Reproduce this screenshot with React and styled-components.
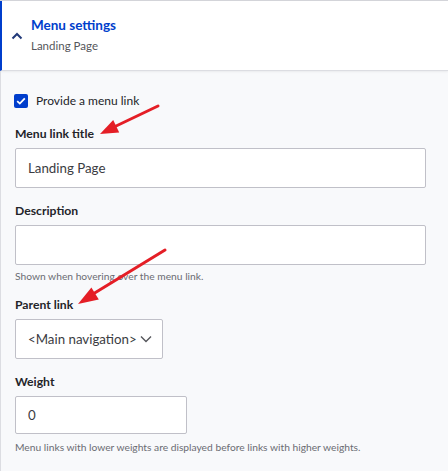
import React from "react";
import styled, { createGlobalStyle } from "styled-components";

const Global = createGlobalStyle`
  html, body { margin: 0; padding: 0; background: #f8f9fb; }
  body { font-family: Lato, "Noto Sans", sans-serif; color: #232429; }
  * { box-sizing: border-box; }
`;

const Page = styled.div`
  position: relative;
  width: 448px;
  height: 471px;
  overflow: hidden;
  background: #f8f9fb;
  border-top: 1px solid #d3d4d9;
`;

const Header = styled.div`
  display: flex;
  align-items: center;
  gap: 8px;
  height: 70px;
  padding: 0 0 0 9px;
  background: #fff;
  border-left: 2px solid #003ecc;
  border-bottom: 1px solid #dcdde2;
  box-shadow: 0 1px 2px rgba(0,0,0,0.06);
`;

const HeaderText = styled.div`
  display: flex;
  flex-direction: column;
  gap: 4px;
  margin-top: -2px;
`;

const Title = styled.div`
  font-size: 13.5px;
  font-weight: 700;
  color: #003ecc;
  line-height: 17px;
`;

const Sub = styled.div`
  font-size: 11.5px;
  color: #55565b;
  line-height: 15px;
`;

const Body = styled.div`
  display: flex;
  flex-direction: column;
  padding: 22px 22px 0 14px;
  border-left: 1px solid #dcdde2;
  height: 400px;
`;

const CheckRow = styled.label`
  display: flex;
  align-items: center;
  gap: 8px;
  font-size: 12px;
  color: #232429;
  margin-left: -1px;
  line-height: 15px;
`;

const Box = styled.span`
  width: 14px;
  height: 14px;
  border-radius: 2px;
  background: #003ecc;
  display: flex;
  align-items: center;
  justify-content: center;
`;

const Field = styled.div`
  display: flex;
  flex-direction: column;
  margin-top: ${p => p.$mt}px;
`;

const Label = styled.div`
  font-size: 12.2px;
  font-weight: 700;
  color: #232429;
  line-height: 16px;
  margin-bottom: 6px;
`;

const Input = styled.div`
  display: flex;
  align-items: center;
  justify-content: space-between;
  width: ${p => p.$w || "100%"};
  height: ${p => p.$h || 40}px;
  padding: 0 10px 0 12px;
  background: #fff;
  border: 1px solid #c0c0c8;
  border-radius: 2px;
  font-size: 13.3px;
  color: #3b3c42;
  white-space: nowrap;
`;

const Help = styled.div`
  font-size: 10.25px;
  color: #6b6c73;
  margin-top: ${p => p.$mt}px;
  line-height: 12px;
`;

const Arrow = styled.svg`
  position: absolute;
  left: 0;
  top: 0;
  pointer-events: none;
`;

export default function App() {
  return (
    <>
      <Global />
      <Page>
        <Header>
          <svg width="12" height="8" viewBox="0 0 12 8">
            <path d="M1.5 6.5 L6 2 L10.5 6.5" fill="none" stroke="#223a7a" strokeWidth="2" />
          </svg>
          <HeaderText>
            <Title>Menu settings</Title>
            <Sub>Landing Page</Sub>
          </HeaderText>
        </Header>
        <Body>
          <CheckRow>
            <Box>
              <svg width="10" height="8" viewBox="0 0 10 8">
                <path d="M1.2 4.2 L3.8 6.6 L8.8 1.4" fill="none" stroke="#fff" strokeWidth="1.8" />
              </svg>
            </Box>
            Provide a menu link
          </CheckRow>
          <Field $mt={18}>
            <Label>Menu link title</Label>
            <Input>Landing Page</Input>
          </Field>
          <Field $mt={15}>
            <Label>Description</Label>
            <Input />
            <Help $mt={5}>Shown when hovering over the menu link.</Help>
          </Field>
          <Field $mt={15}>
            <Label>Parent link</Label>
            <Input $w="148px">
              &lt;Main navigation&gt;
              <svg width="12" height="8" viewBox="0 0 12 8">
                <path d="M1 1.5 L6 6.5 L11 1.5" fill="none" stroke="#55565b" strokeWidth="1.4" />
              </svg>
            </Input>
          </Field>
          <Field $mt={15}>
            <Label>Weight</Label>
            <Input $w="172px" $h={38}>0</Input>
            <Help $mt={7}>Menu links with lower weights are displayed before links with higher weights.</Help>
          </Field>
        </Body>
        <Arrow width="448" height="471" viewBox="0 0 448 471">
          <line x1="158" y1="105" x2="114" y2="126" stroke="#e41e26" strokeWidth="3" strokeLinecap="round" />
          <polygon points="100,133 119.2,131.5 113.2,118.9" fill="#e41e26" />
          <line x1="165" y1="249" x2="93" y2="293" stroke="#e41e26" strokeWidth="3" strokeLinecap="round" />
          <polygon points="78,303 98.8,298.5 91.4,286.5" fill="#e41e26" />
        </Arrow>
      </Page>
    </>
  );
}
